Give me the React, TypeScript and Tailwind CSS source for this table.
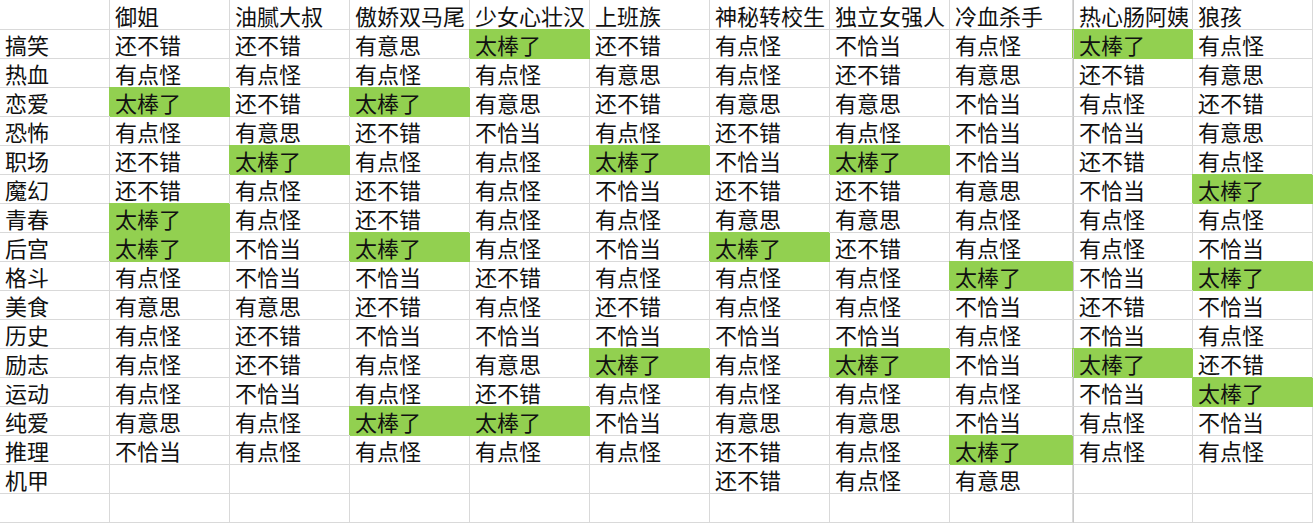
const columns = ["御姐", "油腻大叔", "傲娇双马尾", "少女心壮汉", "上班族", "神秘转校生", "独立女强人", "冷血杀手", "热心肠阿姨", "狼孩"];

// "太棒了" cells get the green fill
const rows: [string, string[]][] = [
  ["搞笑", ["还不错", "还不错", "有意思", "太棒了", "还不错", "有点怪", "不恰当", "有点怪", "太棒了", "有点怪"]],
  ["热血", ["有点怪", "有点怪", "有点怪", "有点怪", "有意思", "有点怪", "还不错", "有意思", "还不错", "有意思"]],
  ["恋爱", ["太棒了", "还不错", "太棒了", "有意思", "还不错", "有意思", "有意思", "不恰当", "有点怪", "还不错"]],
  ["恐怖", ["有点怪", "有意思", "还不错", "不恰当", "有点怪", "还不错", "有点怪", "不恰当", "不恰当", "有意思"]],
  ["职场", ["还不错", "太棒了", "有点怪", "有点怪", "太棒了", "不恰当", "太棒了", "不恰当", "还不错", "有点怪"]],
  ["魔幻", ["还不错", "有点怪", "还不错", "有点怪", "不恰当", "还不错", "还不错", "有意思", "不恰当", "太棒了"]],
  ["青春", ["太棒了", "有点怪", "还不错", "有点怪", "有点怪", "有意思", "有意思", "有点怪", "有点怪", "有点怪"]],
  ["后宫", ["太棒了", "不恰当", "太棒了", "有点怪", "不恰当", "太棒了", "还不错", "有点怪", "有点怪", "不恰当"]],
  ["格斗", ["有点怪", "不恰当", "不恰当", "还不错", "有点怪", "有点怪", "有点怪", "太棒了", "不恰当", "太棒了"]],
  ["美食", ["有意思", "有意思", "还不错", "有点怪", "还不错", "有点怪", "有点怪", "不恰当", "还不错", "不恰当"]],
  ["历史", ["有点怪", "还不错", "不恰当", "不恰当", "不恰当", "不恰当", "不恰当", "有点怪", "不恰当", "有点怪"]],
  ["励志", ["有点怪", "还不错", "有点怪", "有意思", "太棒了", "有点怪", "太棒了", "不恰当", "太棒了", "还不错"]],
  ["运动", ["有点怪", "不恰当", "有点怪", "还不错", "有点怪", "有点怪", "有点怪", "有点怪", "不恰当", "太棒了"]],
  ["纯爱", ["有意思", "有点怪", "太棒了", "太棒了", "不恰当", "有意思", "有意思", "不恰当", "有点怪", "不恰当"]],
  ["推理", ["不恰当", "有点怪", "有点怪", "有点怪", "有点怪", "还不错", "有点怪", "太棒了", "有点怪", "有点怪"]],
  ["机甲", ["", "", "", "", "", "还不错", "有点怪", "有意思", "", ""]],
  ["", ["", "", "", "", "", "", "", "", "", ""]],
];

const Cell = ({ text, col, header }: { text: string; col: number; header?: boolean }) => {
  const good = text === "太棒了";
  return (
    <div
      className={`flex items-end pl-[5px] whitespace-nowrap border-b border-r ${
        header ? "h-[30px]" : "h-[29px]"
      } ${col === 9 ? "border-l border-l-[#c8c8c8]" : ""} ${
        good ? "bg-[#92d050] border-[#92d050] shadow-[-1px_-1px_0_0_#92d050]" : "border-[#d9d9d9]"
      }`}
    >
      <span className="text-[22px] leading-[28px] text-[#111]">{text}</span>
    </div>
  );
};

export default function App() {
  return (
    <div
      className="bg-white w-[1314px] h-[525px] overflow-hidden"
      style={{ fontFamily: '"Noto Sans CJK SC", "Noto Sans", sans-serif' }}
    >
      <div className="grid grid-cols-[110px_120px_120px_120px_120px_120px_120px_120px_123px_120px_120px] w-max">
        <Cell text="" col={0} header />
        {columns.map((c, i) => (
          <Cell key={c} text={c} col={i + 1} header />
        ))}
        {rows.map(([label, vals], r) => (
          <div key={r} className="contents">
            <Cell text={label} col={0} />
            {vals.map((v, i) => (
              <Cell key={i} text={v} col={i + 1} />
            ))}
          </div>
        ))}
      </div>
    </div>
  );
}
